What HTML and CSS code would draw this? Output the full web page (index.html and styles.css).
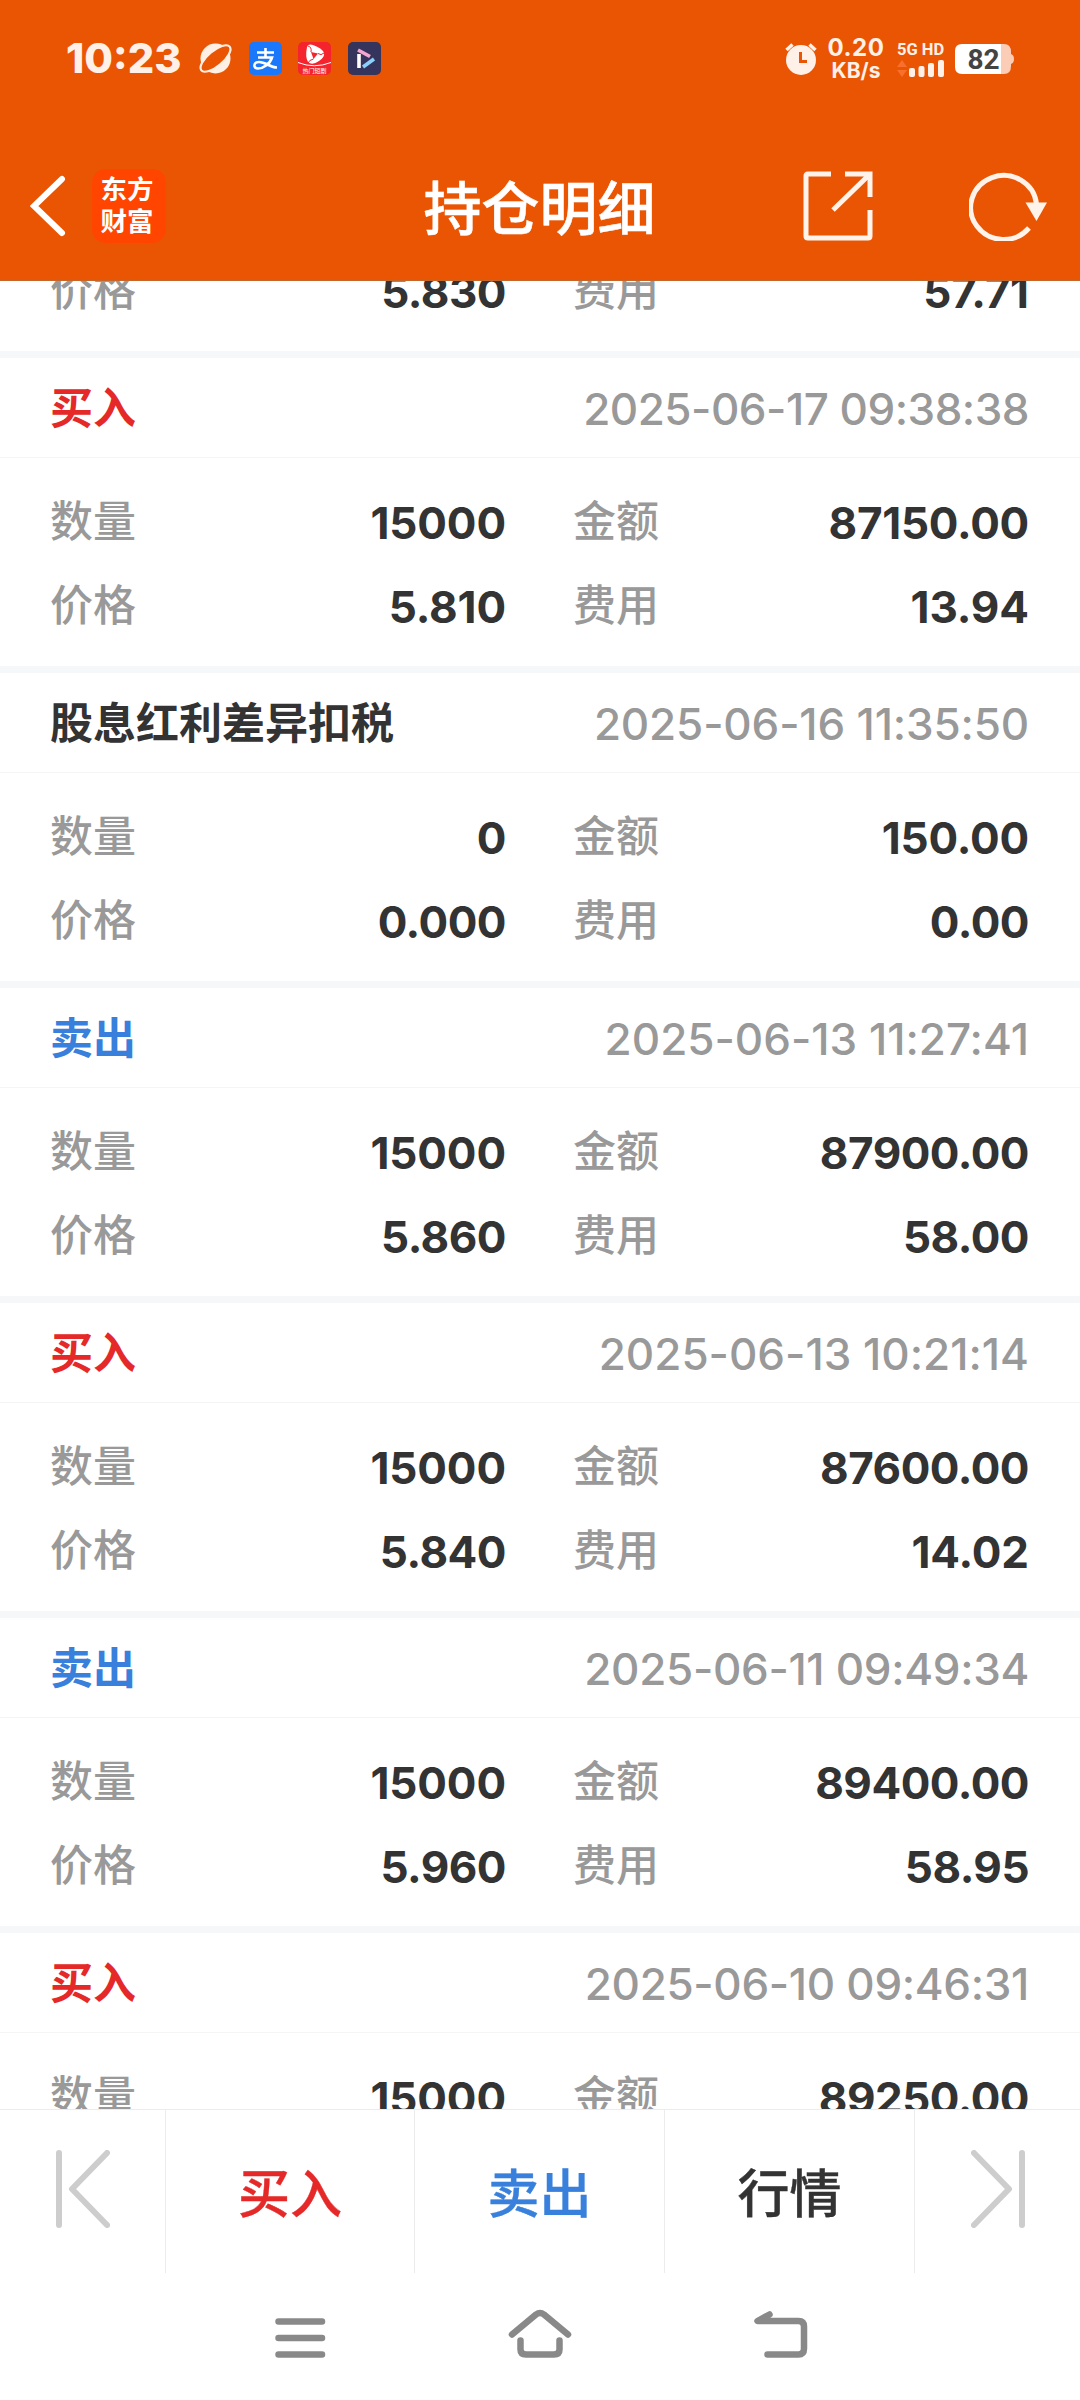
FILE: index.html
```html
<!DOCTYPE html>
<html lang="zh-CN">
<head>
<meta charset="utf-8">
<title>持仓明细</title>
<link rel="stylesheet" href="styles.css">
</head>
<body>
<div class="screen">
  <header class="header">
    <div class="status">
      <span class="clock">10:23</span>
      <svg class="status-icon planet" viewBox="0 0 33 33"><circle cx="16.500" cy="16.500" r="15" fill="#fff0e6"/><ellipse cx="16.500" cy="16.500" rx="18.500" ry="7.500" transform="rotate(-40 16.500 16.500)" fill="#ea5504" stroke="#fff0e6" stroke-width="2.200"/></svg>
      <svg class="status-icon" viewBox="0 0 33 33"><rect width="33" height="33" rx="5" fill="#1b78fb"/><path d="M8 10.500H25M16.500 6V15M9 15.500H23C21 22 14 26.500 9 26.500C4 26.500 4 20 10 20C17 20 21 25.500 28 25.500" fill="none" stroke="#fff" stroke-width="2.600"/></svg>
      <svg class="status-icon" viewBox="0 0 33 33"><rect width="33" height="33" rx="5" fill="#f4232c"/><path d="M9 5Q10 1.500 15 3Q24 6 26 11Q27 15 21 19Q14 24 10 20Q7 15 9 5Z" fill="#fff"/><path d="M13 10L20 11.500L15.500 17Z" fill="#f4232c"/><path d="M13 10Q14 5 10 4M20 11.500Q23 14 26 11M15.500 17Q11 18 10 21" fill="none" stroke="#f4232c" stroke-width="1"/><path d="M0 20.500Q16 27 33 20.500" fill="none" stroke="#fff" stroke-width="1"/><text class="tiny" x="16.500" y="30.500" text-anchor="middle">热门短剧</text></svg>
      <svg class="status-icon" viewBox="0 0 33 33"><rect width="33" height="33" rx="5" fill="#34345c"/><path d="M11 26V12" stroke="#fff" stroke-width="3.600"/><path d="M10 8L22 14.500" stroke="#f3a6cf" stroke-width="3.600"/><path d="M15 25L26 17" stroke="#8bd0fb" stroke-width="3.600"/></svg>
      <span class="status-gap"></span>
      <svg class="alarm" viewBox="0 0 32 33"><circle cx="16" cy="18" r="15" fill="#fff0e8"/><path d="M1.500 8L7.500 2.500M30.500 8L24.500 2.500" stroke="#fff0e8" stroke-width="3.500"/><path d="M15.500 10V19.500H22" fill="none" stroke="#ea5504" stroke-width="3"/></svg>
      <div class="speed"><span class="rate">0.20</span><span>KB/s</span></div>
      <div class="network">
        <span>5G HD</span>
        <svg viewBox="0 0 48 17"><path d="M0 7L5 0L10 7ZM0 10H10L5 17Z" fill="#f8702c"/><g fill="#fff0e8"><rect x="12" y="8" width="6" height="9" rx="2"/><rect x="21.500" y="6" width="6" height="11" rx="2"/><rect x="31" y="3" width="6" height="14" rx="2"/><rect x="41" y="0" width="6" height="17" rx="2"/></g></svg>
      </div>
      <svg class="battery" viewBox="0 0 59 30"><path d="M46 0H49Q56 0 56 8V10Q59 11 59 15Q59 19 56 20V22Q56 30 49 30H46Z" fill="#fbcdb6"/><path d="M7 0H46V30H7Q0 30 0 23V7Q0 0 7 0Z" fill="#fff"/><text class="charge" x="28.500" y="25" text-anchor="middle">82</text></svg>
    </div>
    <div class="titlebar">
      <div class="side">
        <svg class="back" viewBox="0 0 36 62"><path d="M32 4L4 31L32 58" fill="none" stroke="#fff" stroke-width="6" stroke-linecap="round"/></svg>
        <div class="brand"><span>东方</span><span>财富</span></div>
      </div>
      <h1 class="title">持仓明细</h1>
      <div class="side actions">
        <svg class="share" viewBox="0 0 70 70"><path d="M28 3H5Q3 3 3 5V65Q3 67 5 67H65Q67 67 67 65V39M42 3H67V26M66 4L30 39" fill="none" stroke="#fff3ea" stroke-width="5"/></svg>
        <svg class="refresh" viewBox="0 0 78 70"><path d="M60 57A33 32 0 1 1 67.500 33" fill="none" stroke="#fff3ea" stroke-width="5"/><path d="M56.500 31.500H78L67.500 50Z" fill="#fff3ea"/></svg>
      </div>
    </div>
  </header>
  <main class="list" id="list"></main>
  <footer class="tabs">
    <div class="tab"><svg class="edge" viewBox="0 0 54 78"><path d="M3 3V75M51 3L16 39L51 75" fill="none" stroke="#cdcdcd" stroke-width="6" stroke-linecap="round" stroke-linejoin="round"/></svg></div>
    <div class="tab buy">买入</div>
    <div class="tab sell">卖出</div>
    <div class="tab">行情</div>
    <div class="tab"><svg class="edge" viewBox="0 0 54 78"><path d="M51 3V75M3 3L38 39L3 75" fill="none" stroke="#cdcdcd" stroke-width="6" stroke-linecap="round" stroke-linejoin="round"/></svg></div>
  </footer>
  <nav class="nav">
    <svg viewBox="0 0 64 50"><path d="M10.500 14H54M10.500 30.500H54M10.500 47H54"/></svg>
    <svg viewBox="0 0 64 50"><path d="M4 27L28 7Q32 4 36 7L60 27M12.500 33V42Q12.500 47 18 47H46Q51.500 47 51.500 42V33"/></svg>
    <svg viewBox="0 0 64 50"><path d="M21.500 7L9.500 13.500H50.500Q56 13.500 56 19V41Q56 47 50.500 47H19.500"/></svg>
  </nav>
</div>
<script src="app.js"></script>
</body>
</html>
```
FILE: styles.css
```css
* { box-sizing: border-box; }
body { margin: 0; background: #fff; font-family: Inter, "Noto Sans CJK SC", sans-serif; color: #333; }
svg { display: block; flex: none; }
.screen { width: 1080px; height: 2400px; display: flex; flex-direction: column; overflow: hidden; }

.header { flex: none; height: 281px; background: #ea5504; color: #fff; border-bottom: 1px solid #c5662b; }
.status { height: 117px; padding: 0 66px; display: flex; align-items: center; color: #fff0e8; }
.clock { width: 116px; font-size: 41.500px; font-weight: 800; line-height: 50px; padding-bottom: 2px; white-space: nowrap; }
.status-icon { width: 33px; height: 33px; margin-left: 16.500px; }
.planet { margin-left: 17px; overflow: visible; }
.tiny { font-size: 6px; fill: #fff; }
.status-gap { flex: 1; }
.alarm { width: 32px; height: 33px; }
.speed { width: 58px; margin-left: 10px; display: flex; flex-direction: column; align-items: center; font-size: 21px; line-height: 23px; font-weight: 700; white-space: nowrap; }
.rate { font-size: 24px; letter-spacing: 0.500px; }
.network { width: 48px; margin-left: 12px; font: 700 16.500px/18px Roboto, sans-serif; white-space: nowrap; }
.network svg { width: 48px; height: 17px; margin-top: 1px; }
.battery { width: 59px; height: 30px; margin-left: 10px; }
.charge { font: 700 28px Roboto, sans-serif; fill: #444; }

.titlebar { height: 163px; padding: 15px 33px 0 30px; display: grid; grid-template-columns: 1fr auto 1fr; align-items: center; }
.side { display: flex; align-items: center; }
.back { width: 36px; height: 62px; }
.brand { width: 74px; height: 74px; margin-left: 26px; padding: 0 4px 4px 0; border-radius: 14px; background: #ff4500; display: flex; flex-direction: column; align-items: center; justify-content: center; font: 700 26.500px/32px "Noto Sans CJK SC", sans-serif; }
.title { margin: 0; padding: 6px 0 0 2px; font-size: 58px; line-height: 84px; font-weight: 500; -webkit-text-stroke: 0.500px currentColor; }
.actions { justify-content: flex-end; gap: 96px; }
.share { width: 70px; height: 70px; }
.refresh { width: 78px; height: 70px; }

.list { flex: none; height: 1828px; overflow: hidden; display: flex; flex-direction: column; }
.record { flex: none; height: 315px; border-bottom: 7px solid #f6f7f9; }
.record-first { height: 77px; }
.record-first .fields { padding-top: 0; margin-top: -32px; }
.record-head { height: 100px; padding: 0 51px 0 50px; display: flex; align-items: center; justify-content: space-between; border-bottom: 1px solid #f5f5f6; }
.kind { font-size: 43px; line-height: 64px; font-weight: 700; }
.time { padding-top: 2px; font-size: 44px; font-weight: 500; color: #999; white-space: nowrap; }
.buy { color: #e52828; }
.sell { color: #3880dc; }
.fields { padding: 22px 51px 0 50px; display: grid; grid-template-columns: 456px 456px; column-gap: 67px; grid-auto-rows: 84px; }
.field { display: flex; align-items: center; justify-content: space-between; }
.label { padding-bottom: 2px; font-size: 43px; line-height: 64px; font-weight: 500; color: #999; }
.value { padding-top: 1px; font-size: 44px; font-weight: 700; }

.tabs { flex: none; height: 164px; border-top: 1px solid #ececec; display: grid; grid-template-columns: 166px 249px 250px 250px 165px; }
.tab { display: flex; align-items: center; justify-content: center; padding-bottom: 2px; font-size: 52px; font-weight: 500; border-right: 1px solid #ececec; -webkit-text-stroke: 0.400px currentColor; }
.tab:last-child { border-right: 0; }
.edge { width: 54px; height: 78px; margin-bottom: 4px; }
.nav { flex: 1; padding-top: 33px; display: flex; justify-content: center; gap: 176px; }
.nav svg { width: 64px; height: 53px; fill: none; stroke: #898989; stroke-width: 6.500; stroke-linecap: round; stroke-linejoin: round; overflow: visible; }
```
FILE: app.js
```javascript
const records = [
  { price: "5.830", fee: "57.71" },
  { kind: "买入", tone: "buy", time: "2025-06-17 09:38:38", count: "15000", amount: "87150.00", price: "5.810", fee: "13.94" },
  { kind: "股息红利差异扣税", tone: "", time: "2025-06-16 11:35:50", count: "0", amount: "150.00", price: "0.000", fee: "0.00" },
  { kind: "卖出", tone: "sell", time: "2025-06-13 11:27:41", count: "15000", amount: "87900.00", price: "5.860", fee: "58.00" },
  { kind: "买入", tone: "buy", time: "2025-06-13 10:21:14", count: "15000", amount: "87600.00", price: "5.840", fee: "14.02" },
  { kind: "卖出", tone: "sell", time: "2025-06-11 09:49:34", count: "15000", amount: "89400.00", price: "5.960", fee: "58.95" },
  { kind: "买入", tone: "buy", time: "2025-06-10 09:46:31", count: "15000", amount: "89250.00" }
];

// Narrow the digits slightly, giving room back for each narrow "1".
const tracked = (cls, text, perChar, perOne) => {
  const ones = text.split("1").length - 1;
  const spacing = (perChar + perOne * ones / text.length).toFixed(2);
  return `<span class="${cls}" style="letter-spacing:${spacing}px">${text}</span>`;
};

const field = (label, value) => value === undefined ? "" :
  `<div class="field"><span class="label">${label}</span>${tracked("value", value, -0.5, 2)}</div>`;

document.getElementById("list").innerHTML = records.map(r => `
  <section class="record${r.kind ? "" : " record-first"}">
    ${r.kind ? `<div class="record-head"><span class="kind ${r.tone}">${r.kind}</span>${tracked("time", r.time, -0.66, 3.2)}</div>` : ""}
    <div class="fields">${field("数量", r.count)}${field("金额", r.amount)}${field("价格", r.price)}${field("费用", r.fee)}</div>
  </section>`).join("");
```
